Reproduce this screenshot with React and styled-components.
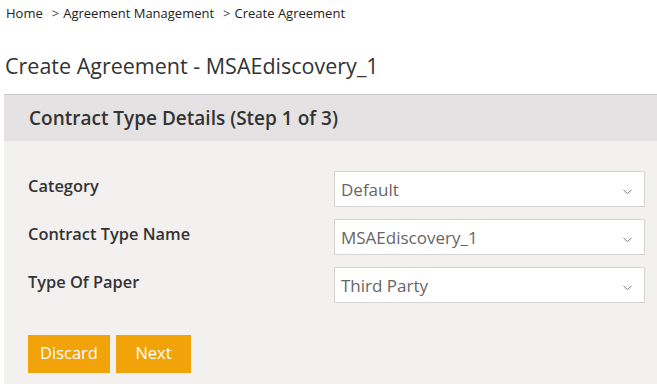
import React from "react";
import styled, { createGlobalStyle } from "styled-components";

const Global = createGlobalStyle`
  html, body { margin: 0; padding: 0; background: #fff; }
  body { font-family: "Open Sans", "Noto Sans", sans-serif; color: #333; }
  * { box-sizing: border-box; }
`;

const Page = styled.div`
  width: 657px;
  height: 384px;
  overflow: hidden;
  display: flex;
  flex-direction: column;
`;

const Breadcrumb = styled.nav`
  display: flex;
  align-items: center;
  height: 28px;
  padding: 0 0 2px 6px;
  font-size: 13px;
  color: #222;
`;

const Crumb = styled.span`
  margin-right: 9px;
`;

const Sep = styled.span`
  margin-right: 4px;
  color: #444;
`;

const Title = styled.h1`
  margin: 0;
  padding: 8px 0 0 5px;
  height: 66px;
  display: flex;
  align-items: center;
  font-size: 21.5px;
  font-weight: 400;
  color: #333;
`;

const Panel = styled.section`
  margin-left: 4px;
  flex: 1;
  border-top: 1px solid #c9c9c9;
  background: #f2f1f0;
  display: flex;
  flex-direction: column;
`;

const PanelHeader = styled.div`
  height: 46px;
  background: #e4e2e3;
  display: flex;
  align-items: center;
  padding-left: 25px;
  font-size: 19px;
  font-weight: 600;
  color: #333;
`;

const Form = styled.div`
  padding: 30px 12px 0 24px;
  display: flex;
  flex-direction: column;
  gap: 12px;
`;

const Row = styled.div`
  display: grid;
  grid-template-columns: 306px 1fr;
  align-items: center;
  height: 36px;
`;

const Label = styled.label`
  font-size: 16.4px;
  font-weight: 600;
  color: #333;
  position: relative;
  top: -4px;
`;

const Select = styled.div`
  height: 36px;
  background: #fff;
  border: 1px solid #d4d4d4;
  display: flex;
  align-items: center;
  justify-content: space-between;
  padding: 0 12px 0 6px;
  font-size: 17px;
  color: #666;
`;

const Chevron = () => (
  <svg width="9" height="6" viewBox="0 0 9 6" style={{ marginTop: 6 }}>
    <path d="M0.5 0.8 L4.5 4.8 L8.5 0.8" fill="none" stroke="#777" strokeWidth="1" />
  </svg>
);

const Actions = styled.div`
  display: flex;
  gap: 6px;
  padding: 32px 0 0 24px;
`;

const Button = styled.button`
  height: 38px;
  width: ${(p) => p.$w}px;
  border: none;
  background: #f2a30a;
  color: #fff;
  font-family: inherit;
  font-size: 16.5px;
  padding: 0 0 3px;
  cursor: pointer;
`;

const fields = [
  { label: "Category", value: "Default" },
  { label: "Contract Type Name", value: "MSAEdiscovery_1" },
  { label: "Type Of Paper", value: "Third Party" },
];

export default function App() {
  return (
    <Page>
      <Global />
      <Breadcrumb>
        <Crumb>Home</Crumb>
        <Sep>&gt;</Sep>
        <Crumb>Agreement Management</Crumb>
        <Sep>&gt;</Sep>
        <Crumb>Create Agreement</Crumb>
      </Breadcrumb>
      <Title>Create Agreement - MSAEdiscovery_1</Title>
      <Panel>
        <PanelHeader>Contract Type Details (Step 1 of 3)</PanelHeader>
        <Form>
          {fields.map((f) => (
            <Row key={f.label}>
              <Label>{f.label}</Label>
              <Select>
                <span>{f.value}</span>
                <Chevron />
              </Select>
            </Row>
          ))}
        </Form>
        <Actions>
          <Button $w={82}>Discard</Button>
          <Button $w={75}>Next</Button>
        </Actions>
      </Panel>
    </Page>
  );
}
